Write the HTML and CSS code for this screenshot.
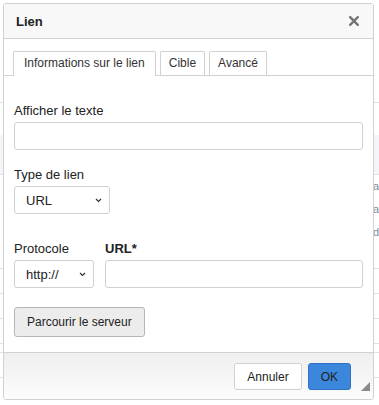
FILE: index.html
```html
<!DOCTYPE html>
<html lang="fr">
<head>
    <meta charset="UTF-8">
    <meta name="viewport" content="width=device-width, initial-scale=1.0">
    <title>Lien</title>
    <link rel="stylesheet" href="styles.css">
</head>
<body>
    <!-- editor page behind the dialog -->
    <div class="page">
        <div class="page-row page-top"></div>
        <div class="page-row page-gap"></div>
        <div class="page-row page-band"></div>
        <div class="page-row page-text"><span>a</span></div>
        <div class="page-row page-text"><span>a</span></div>
        <div class="page-row page-text"><span>d</span></div>
        <div class="page-row page-line"></div>
        <div class="page-row page-line"></div>
        <div class="page-row page-line"></div>
        <div class="page-row page-line"></div>
        <div class="page-row page-line small"></div>
        <div class="page-row page-line"></div>
    </div>

    <div class="dialog">
        <div class="dialog-title">
            <span>Lien</span>
            <a class="close" href="#" title="Fermer">
                <svg width="10" height="10" viewBox="0 0 10 10">
                    <path d="M1.2 1.2 L8.8 8.8 M8.8 1.2 L1.2 8.8" stroke="#777" stroke-width="2.4" stroke-linecap="square"/>
                </svg>
            </a>
        </div>

        <div class="tabs">
            <a class="tab selected" href="#">Informations sur le lien</a>
            <a class="tab" href="#">Cible</a>
            <a class="tab" href="#">Avancé</a>
        </div>

        <div class="contents">
            <div class="field">
                <label for="text">Afficher le texte</label>
                <input type="text" id="text" class="input">
            </div>

            <div class="field">
                <label for="linkType">Type de lien</label>
                <div class="select-wrap type">
                    <select id="linkType" class="select">
                        <option>URL</option>
                    </select>
                    <svg class="chevron" width="7" height="5" viewBox="0 0 7 5">
                        <path d="M1 1 L3.5 3.5 L6 1" fill="none" stroke="#333" stroke-width="1.2"/>
                    </svg>
                </div>
            </div>

            <div class="field-row">
                <div class="field protocol">
                    <label for="protocol">Protocole</label>
                    <div class="select-wrap">
                        <select id="protocol" class="select">
                            <option>http://</option>
                        </select>
                        <svg class="chevron" width="7" height="5" viewBox="0 0 7 5">
                            <path d="M1 1 L3.5 3.5 L6 1" fill="none" stroke="#333" stroke-width="1.2"/>
                        </svg>
                    </div>
                </div>
                <div class="field url">
                    <label for="url" class="required">URL*</label>
                    <input type="text" id="url" class="input">
                </div>
            </div>

            <button class="browse">Parcourir le serveur</button>
        </div>

        <div class="footer">
            <button class="btn">Annuler</button>
            <button class="btn btn-ok">OK</button>
            <div class="resizer"></div>
        </div>
    </div>
</body>
</html>
```

FILE: styles.css
```css
body {
    font-family: 'Liberation Sans', Arial, Helvetica, sans-serif;
    margin: 0;
    padding: 0;
    background-color: #fff;
    color: #222;
    font-size: 13px;
}

/* page behind */
.page {
    width: 379px;
    height: 405px;
    overflow: hidden;
}
.page-row {
    border-bottom: 1px solid #e2e2e2;
}
.page-top {
    height: 102px;
}
.page-gap {
    height: 32px;
    border-bottom: none;
}
.page-band {
    height: 39px;
    background-color: #f4f4f9;
}
.page-text {
    height: 23px;
    border-bottom: none;
    text-align: right;
    color: #888;
    font-size: 11px;
    line-height: 23px;
}
.page-line {
    height: 24px;
}
.page-line.small {
    height: 8px;
}

/* dialog */
.dialog {
    position: absolute;
    top: 3px;
    left: 3px;
    width: 371px;
    height: 397px;
    box-sizing: border-box;
    border: 1px solid #d1d1d1;
    border-radius: 3px;
    background-color: #fff;
    display: flex;
    flex-direction: column;
    overflow: hidden;
}
.dialog-title {
    height: 34px;
    background-color: #f8f8f8;
    border-bottom: 1px solid #d1d1d1;
    display: flex;
    align-items: center;
    justify-content: space-between;
    padding: 0 12px;
    font-weight: bold;
    font-size: 13px;
    color: #222;
}
.close {
    display: flex;
    margin-right: 2px;
}

.tabs {
    display: flex;
    padding: 12px 0 0 9px;
    border-bottom: 1px solid #d1d1d1;
}
.tab {
    height: 23px;
    line-height: 23px;
    padding: 0 8px;
    margin-right: 4px;
    margin-bottom: -1px;
    border: 1px solid #d1d1d1;
    border-bottom: none;
    border-radius: 2px 2px 0 0;
    background-color: #fff;
    color: #333;
    font-size: 12px;
    text-decoration: none;
}
.tab.selected {
    height: 24px;
    padding: 0 10px;
}

.contents {
    flex: 1;
    padding: 27px 10px 0 10px;
}
.field {
    display: flex;
    flex-direction: column;
    margin-bottom: 17px;
}
.field label {
    line-height: 16px;
    margin-bottom: 3px;
    color: #222;
}
.field label.required {
    font-weight: bold;
}
.input {
    height: 28px;
    box-sizing: border-box;
    border: 1px solid #d1d1d1;
    border-radius: 3px;
    padding: 4px 10px;
    font-size: 13px;
    font-family: inherit;
}
.select-wrap {
    position: relative;
    width: 80px;
}
.select-wrap.type {
    width: 96px;
}
.select {
    width: 100%;
    height: 28px;
    box-sizing: border-box;
    border: 1px solid #d1d1d1;
    border-radius: 3px;
    padding: 0 10px 0 11px;
    font-size: 13px;
    font-family: inherit;
    color: #222;
    background-color: #fff;
    appearance: none;
    -webkit-appearance: none;
}
.chevron {
    position: absolute;
    right: 8px;
    top: 12px;
}
.field-row {
    display: flex;
    gap: 11px;
    margin-top: 27px;
}
.field-row .field {
    margin-bottom: 19px;
}
.field.url {
    flex: 1;
}

.browse {
    display: block;
    height: 30px;
    padding: 0 12px;
    background-color: #ececec;
    border: 1px solid #b6b6b6;
    border-radius: 3px;
    font-size: 12px;
    font-family: inherit;
    color: #222;
}

.footer {
    position: relative;
    height: 47px;
    box-sizing: border-box;
    border-top: 1px solid #d1d1d1;
    background: linear-gradient(#efefef, #fcfcfc);
    display: flex;
    justify-content: flex-end;
    align-items: flex-start;
    gap: 6px;
    padding: 10px 22px 0 0;
}
.btn {
    height: 27px;
    padding: 0 12px;
    background-color: #fff;
    border: 1px solid #d1d1d1;
    border-radius: 3px;
    font-size: 12px;
    font-family: inherit;
    color: #222;
}
.btn-ok {
    padding: 0 12px;
    background-color: #3b87dc;
    border-color: #2f72c4;
    color: #222;
}
.resizer {
    position: absolute;
    right: 3px;
    bottom: 8px;
    width: 0;
    height: 0;
    border-left: 9px solid transparent;
    border-bottom: 9px solid #8a8a8a;
}
```
